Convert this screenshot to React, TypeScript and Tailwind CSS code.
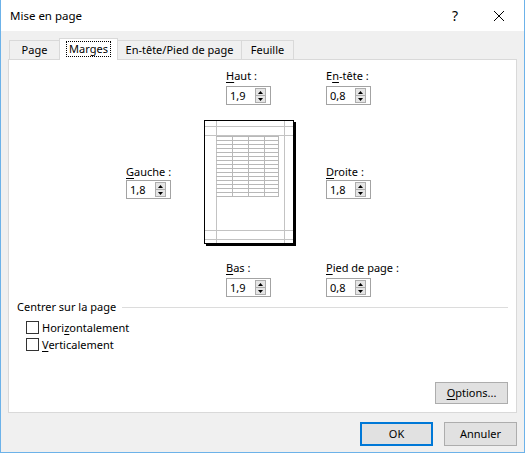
import React from "react";

const font = { fontFamily: '"Noto Sans", "Liberation Sans", sans-serif' };

function U({ children }: { children: React.ReactNode }) {
  return <span className="underline decoration-1 underline-offset-2">{children}</span>;
}

function Spin({ value }: { value: string }) {
  return (
    <div className="flex h-[19px] w-[45px] items-center border border-[#a3a3a3] bg-white">
      <span className="pl-[3px] text-[11px] leading-[16px] text-black">{value}</span>
      <div className="ml-auto mr-[4px] flex h-[15px] w-[11px] flex-col">
        <div className="flex h-[8px] items-center justify-center border border-[#adadad] bg-[#e5e5e5]">
          <svg width="5" height="3" viewBox="0 0 5 3">
            <polygon points="2.5,0 5,3 0,3" fill="#000" />
          </svg>
        </div>
        <div className="-mt-px flex h-[8px] items-center justify-center border border-[#adadad] bg-[#e5e5e5]">
          <svg width="5" height="3" viewBox="0 0 5 3">
            <polygon points="0,0 5,0 2.5,3" fill="#000" />
          </svg>
        </div>
      </div>
    </div>
  );
}

function Field({ label, value, gap }: { label: React.ReactNode; value: string; gap: string }) {
  return (
    <div className="flex flex-col">
      <div className={`h-[16px] text-[11px] leading-[16px] text-black ${gap}`}>{label}</div>
      <Spin value={value} />
    </div>
  );
}

function Preview() {
  const rows: number[] = [];
  for (let i = 0; i < 16; i++) rows.push(16 + i * 4);
  const g = "#c3c3c3";
  return (
    <svg width="92" height="126" viewBox="0 0 92 126" className="shrink-0">
      <rect x="0" y="0" width="90" height="124" fill="#fff" />
      <line x1="12.5" y1="0" x2="12.5" y2="124" stroke={g} />
      <line x1="80.5" y1="0" x2="80.5" y2="124" stroke={g} />
      <line x1="0" y1="6.5" x2="90" y2="6.5" stroke={g} />
      <line x1="0" y1="15.5" x2="90" y2="15.5" stroke={g} />
      <line x1="0" y1="110.5" x2="90" y2="110.5" stroke={g} />
      <line x1="0" y1="119.5" x2="90" y2="119.5" stroke={g} />
      {rows.map((y) => (
        <line key={y} x1="12" y1={y + 0.5} x2="75" y2={y + 0.5} stroke="#b8b8b8" />
      ))}
      {[28, 44, 60, 74].map((x) => (
        <line key={x} x1={x + 0.5} y1="16" x2={x + 0.5} y2="77" stroke="#b8b8b8" />
      ))}
      <rect x="0.5" y="0.5" width="89" height="123" fill="none" stroke="#000" />
      <rect x="90" y="2" width="2" height="124" fill="#000" />
      <rect x="2" y="124" width="90" height="2" fill="#000" />
    </svg>
  );
}

function Check({ label }: { label: React.ReactNode }) {
  return (
    <div className="flex h-[17px] items-center pl-[17px]">
      <div className="h-[13px] w-[13px] border border-[#333] bg-white" />
      <span className="pl-[3px] text-[11px] leading-[16px] text-black">{label}</span>
    </div>
  );
}

export default function App() {
  return (
    <div
      className="flex h-[453px] w-[525px] flex-col border-x border-b border-[#6cb2e9] bg-[#f0f0f0]"
      style={font}
    >
      <div className="flex h-[31px] shrink-0 items-center bg-white">
        <span className="pl-[9px] text-[11.5px] leading-[16px] text-black">Mise en page</span>
        <span className="ml-auto mr-[36px] text-[14px] leading-[16px] text-black">?</span>
        <svg width="10" height="10" viewBox="0 0 10 10" className="mr-[20px]">
          <line x1="0" y1="0" x2="10" y2="10" stroke="#000" strokeWidth="1" />
          <line x1="10" y1="0" x2="0" y2="10" stroke="#000" strokeWidth="1" />
        </svg>
      </div>

      <div className="flex flex-col px-[7px]">
        <div className="mt-[7px] flex h-[21px] items-end pl-px">
          <div className="flex h-[19px] w-[50px] items-center justify-center border-l border-t border-[#d9d9d9] bg-[#f0f0f0] text-[11px] text-black">
            Page
          </div>
          <div className="relative z-10 -mb-px flex h-[22px] w-[59px] items-center justify-center border-x border-t border-[#d9d9d9] bg-white pb-[2px] text-[11px] text-black">
            <span className="border border-dotted border-black px-[2px] leading-[14px]">Marges</span>
          </div>
          <div className="flex h-[19px] w-[124px] items-center justify-center border-r border-t border-[#d9d9d9] bg-[#f0f0f0] text-[11px] text-black">
            En-tête/Pied de page
          </div>
          <div className="flex h-[19px] w-[52px] items-center justify-center border-r border-t border-[#d9d9d9] bg-[#f0f0f0] text-[11px] text-black">
            Feuille
          </div>
        </div>

        <div className="flex h-[354px] flex-col border border-[#d9d9d9] bg-white">
          <div className="mt-[8px] flex pl-[217px]">
            <div className="w-[100px]">
              <Field label={<><U>H</U>aut :</>} value="1,9" gap="mb-[2px]" />
            </div>
            <Field label={<>E<U>n</U>-tête :</>} value="0,8" gap="mb-[2px]" />
          </div>

          <div className="mt-[15px] flex pl-[117px]">
            <div className="w-[78px] pt-[44px]">
              <Field label={<><U>G</U>auche :</>} value="1,8" gap="" />
            </div>
            <Preview />
            <div className="ml-[30px] pt-[44px]">
              <Field label={<><U>D</U>roite :</>} value="1,8" gap="" />
            </div>
          </div>

          <div className="mt-[14px] flex pl-[217px]">
            <div className="w-[100px]">
              <Field label={<><U>B</U>as :</>} value="1,9" gap="mb-[2px]" />
            </div>
            <Field label={<><U>P</U>ied de page :</>} value="0,8" gap="mb-[2px]" />
          </div>

          <div className="mt-[2px] flex h-[16px] items-center pl-[8px] pr-[8px]">
            <span className="text-[11px] leading-[16px] text-black">Centrer sur la page</span>
            <div className="ml-[6px] h-px flex-1 bg-[#dcdcdc]" />
          </div>
          <div className="mt-[4px] flex flex-col">
            <Check label={<>Hori<U>z</U>ontalement</>} />
            <Check label={<><U>V</U>erticalement</>} />
          </div>

          <div className="mb-[8px] mr-[8px] mt-auto flex justify-end">
            <div className="flex h-[22px] w-[73px] items-center justify-center border border-[#adadad] bg-[#e1e1e1] text-[11px] text-black">
              <span><U>O</U>ptions...</span>
            </div>
          </div>
        </div>

        <div className="mt-[9px] flex justify-end gap-[11px]">
          <div className="flex h-[24px] w-[73px] items-center justify-center border-2 border-[#0078d7] bg-[#e1e1e1] text-[11px] text-black">
            OK
          </div>
          <div className="flex h-[24px] w-[73px] items-center justify-center border border-[#adadad] bg-[#e1e1e1] text-[11px] text-black">
            Annuler
          </div>
        </div>
      </div>
    </div>
  );
}
